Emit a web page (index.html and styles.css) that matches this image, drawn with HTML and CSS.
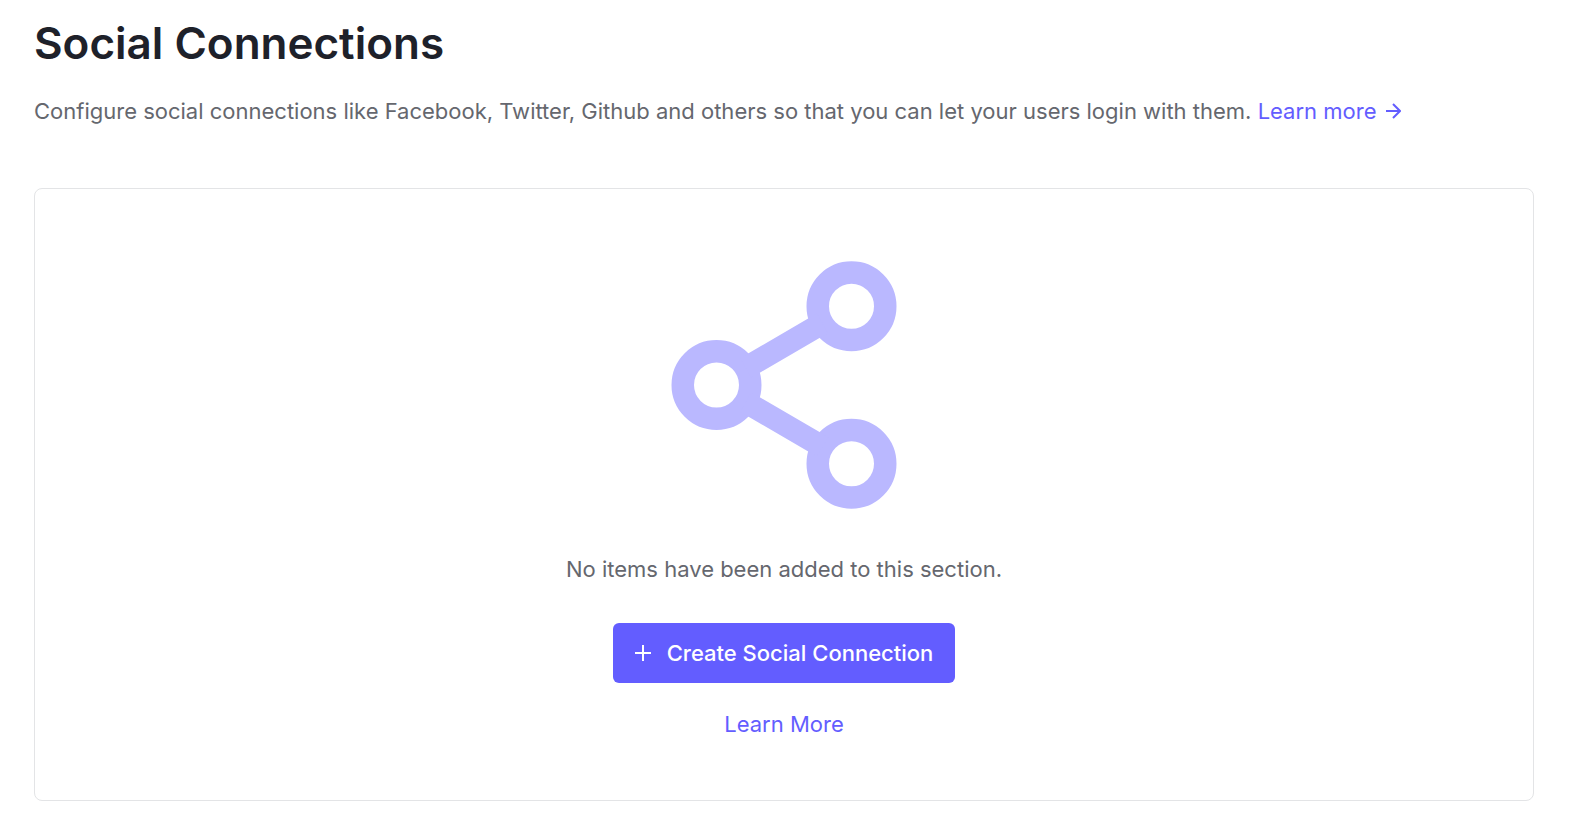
FILE: index.html
```html
<!DOCTYPE html>
<html lang="en">
<head>
<meta charset="utf-8">
<title>Social Connections</title>
<link rel="stylesheet" href="styles.css">
</head>
<body>

<main class="page">
    <header class="page-header">
        <h1>Social Connections</h1>
        <p>Configure social connections like Facebook, Twitter, Github and others so that you can let your users login with them.
            <a class="link" href="#">Learn more
                <svg class="arrow" viewBox="0 0 16 16" aria-hidden="true"><path d="M1 8h14M8 1l7 7-7 7"/></svg></a>
        </p>
    </header>

    <section class="empty-state">
        <svg class="share-icon" viewBox="0 0 24 24" aria-hidden="true">
            <circle cx="18" cy="5" r="3"/>
            <circle cx="6" cy="12" r="3"/>
            <circle cx="18" cy="19" r="3"/>
            <path d="M8.59 13.51l6.83 3.98M15.41 6.51l-6.82 3.98"/>
        </svg>
        <p>No items have been added to this section.</p>
        <button class="create-button" type="button">
            <svg class="plus" viewBox="0 0 16 16" aria-hidden="true"><path d="M8 0v16M0 8h16"/></svg>
            Create Social Connection
        </button>
        <a class="link" href="#">Learn More</a>
    </section>
</main>

</body>
</html>
```
FILE: styles.css
```css
* {
    box-sizing: border-box;
}

body {
    margin: 0;
    background: #fff;
    color: #65676e;
    font-family: Inter, "Liberation Sans", sans-serif;
    font-size: 22px;
    line-height: 30px;
}

.page {
    padding: 16px 36px 38px 34px;
}

h1 {
    margin: 0;
    color: #1e212a;
    font-size: 44px;
    font-weight: 600;
    line-height: 54px;
}

p {
    margin: 0;
}

.page-header p {
    margin-top: 26px;
}

.link {
    color: #635dff;
    text-decoration: none;
}

.arrow {
    width: 16px;
    height: 16px;
    margin-left: 2px;
    fill: none;
    stroke: currentColor;
    stroke-width: 2;
}

.empty-state {
    display: flex;
    flex-direction: column;
    align-items: center;
    margin-top: 62px;
    padding: 61px 24px;
    border: 1px solid #e3e4e6;
    border-radius: 8px;
}

.share-icon {
    width: 270px;
    height: 270px;
    fill: none;
    stroke: #bab8ff;
    stroke-width: 2;
}

.empty-state p {
    margin-top: 34px;
}

.create-button {
    display: flex;
    align-items: center;
    gap: 16px;
    height: 60px;
    margin: 39px 0 26px;
    padding: 0 22px;
    border: 0;
    border-radius: 6px;
    background: #635dff;
    color: #fff;
    font: inherit;
    font-weight: 500;
}

.plus {
    width: 16px;
    height: 16px;
    stroke: currentColor;
    stroke-width: 2;
}
```
